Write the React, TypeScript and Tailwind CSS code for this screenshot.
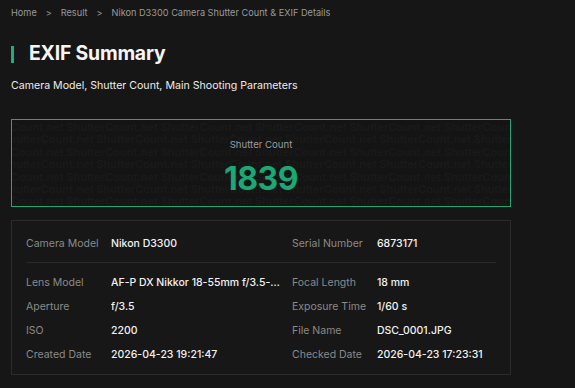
import React from "react";

const rows = [
  [
    ["Lens Model", "AF-P DX Nikkor 18-55mm f/3.5-5.6G VR"],
    ["Focal Length", "18 mm"],
  ],
  [
    ["Aperture", "f/3.5"],
    ["Exposure Time", "1/60 s"],
  ],
  [
    ["ISO", "2200"],
    ["File Name", "DSC_0001.JPG"],
  ],
  [
    ["Created Date", "2026-04-23 19:21:47"],
    ["Checked Date", "2026-04-23 17:23:31"],
  ],
];

const watermark = Array.from({ length: 8 }, (_, i) => i);

function Cell({ label, value }: { label: string; value: string }) {
  return (
    <div className="flex items-center min-w-0">
      <span className="w-[85px] shrink-0 whitespace-nowrap text-[#8a8a8a]">{label}</span>
      <span className="truncate text-[#f2f2f2] font-medium pr-[12px]">{value}</span>
    </div>
  );
}

export default function App() {
  return (
    <div
      className="w-[575px] h-[388px] bg-[#161616] overflow-hidden"
      style={{ fontFamily: "Inter, 'Noto Sans', sans-serif" }}
    >
      <div className="w-[500px] ml-[11px]">
        {/* Breadcrumb */}
        <div className="flex items-center gap-[8px] pt-[6px] text-[9.2px] leading-[14px] text-[#9a9a9a]">
          <span>Home</span>
          <span className="text-[9px] px-[1px]">&gt;</span>
          <span>Result</span>
          <span className="text-[9px] px-[1px]">&gt;</span>
          <span>Nikon D3300 Camera Shutter Count &amp; EXIF Details</span>
        </div>

        {/* Title */}
        <div className="flex items-center mt-[22px] h-[24px]">
          <div className="w-[3px] h-[17px] bg-[#1fae7a]" />
          <h1 className="ml-[15px] text-[19.4px] font-bold text-[#f5f5f5] tracking-[-0.2px]">EXIF Summary</h1>
        </div>

        <p className="mt-[13px] text-[10.6px] leading-[14px] text-[#ececec]">
          Camera Model, Shutter Count, Main Shooting Parameters
        </p>

        {/* Shutter count */}
        <div className="relative mt-[26px] h-[88px] border-[1.5px] border-[#27a574] bg-[#141414] overflow-hidden flex flex-col items-center">
          <div className="absolute inset-0 overflow-hidden pt-[1px] text-[11px] leading-[12.4px] text-[#1a1a1a] font-semibold select-none">
            {watermark.map((i) => (
              <div
                key={i}
                className="whitespace-nowrap"
                style={{ marginLeft: i % 2 === 0 ? -40 : -10 }}
              >
                {"ShutterCount.net ".repeat(10)}
              </div>
            ))}
          </div>
          <div className="relative mt-[18px] text-[9.6px] leading-[14px] text-[#9c9c9c]">Shutter Count</div>
          <div className="relative mt-[8px] text-[32px] leading-[38px] font-bold text-[#1aa874] tracking-[-0.5px]">
            1839
          </div>
        </div>

        {/* Details */}
        <div className="mt-[13px] border border-[#2c2c2c] bg-[#171717] px-[14px] pt-[13px] pb-[7px] text-[10.5px]">
          <div className="grid grid-cols-[266px_1fr] h-[19px] items-center">
            <Cell label="Camera Model" value="Nikon D3300" />
            <Cell label="Serial Number" value="6873171" />
          </div>
          <div className="h-px bg-[#2a2a2a] mt-[9px] mb-[8px]" />
          <div className="flex flex-col">
            {rows.map((r, i) => (
              <div key={i} className="grid grid-cols-[266px_1fr] h-[24px] items-center">
                <Cell label={r[0][0]} value={r[0][1]} />
                <Cell label={r[1][0]} value={r[1][1]} />
              </div>
            ))}
          </div>
        </div>
      </div>
    </div>
  );
}
